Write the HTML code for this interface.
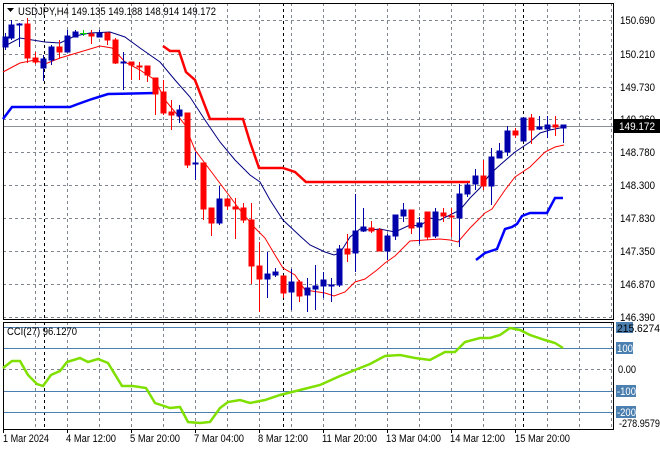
<!DOCTYPE html>
<html><head><meta charset="utf-8"><style>
html,body{margin:0;padding:0;background:#fff;}
svg{display:block;font-family:"Liberation Sans",sans-serif;}
</style></head><body>
<svg width="660" height="450" viewBox="0 0 660 450" xmlns="http://www.w3.org/2000/svg">
<rect width="660" height="450" fill="#fff"/>
<g stroke="#7f8690" stroke-width="1" stroke-dasharray="3,3" fill="none">
<path d="M35.5 3V319M67.5 3V319M99.5 3V319M131.5 3V319M163.5 3V319M195.5 3V319M227.5 3V319M259.5 3V319M291.5 3V319M323.5 3V319M355.5 3V319M387.5 3V319M419.5 3V319M451.5 3V319M483.5 3V319M515.5 3V319M547.5 3V319M579.5 3V319M611.5 3V319"/>
<path d="M35.5 322V429M67.5 322V429M99.5 322V429M131.5 322V429M163.5 322V429M195.5 322V429M227.5 322V429M259.5 322V429M291.5 322V429M323.5 322V429M355.5 322V429M387.5 322V429M419.5 322V429M451.5 322V429M483.5 322V429M515.5 322V429M547.5 322V429M579.5 322V429M611.5 322V429"/>
<path d="M3 20.5H614M3 54.5H614M3 87.5H614M3 119.5H614M3 152.5H614M3 185.5H614M3 218.5H614M3 251.5H614M3 284.5H614M3 317.5H614M3 369.5H614"/>
</g>
<g stroke="#000" stroke-width="1" stroke-dasharray="3,3" fill="none">
<path d="M44.5 3V319M283.5 3V319M523.5 3V319M44.5 322V429M283.5 322V429M523.5 322V429"/>
</g>
<path d="M3 126.5H614" stroke="#8a9098" stroke-width="1"/>
<g stroke="#4a7fb0" stroke-width="1">
<path d="M3 327.5H614M3 348.5H614M3 391.5H614M3 412.5H614"/>
</g>
<rect x="3.5" y="3.5" width="610" height="316" fill="none" stroke="#000"/>
<rect x="3.5" y="322.5" width="610" height="107" fill="none" stroke="#000"/>
<polyline fill="none" stroke="#f00" stroke-width="2.5" points="163,46 170,51 179,51 186,72 195,80 210,119 243,119 250,142 259,168 283,168 295,172 306,182 470,182"/>
<polyline fill="none" stroke="#00f" stroke-width="2.5" points="3,119 12,107 70,107 78,104 92,99 108,94 155,93"/>
<polyline fill="none" stroke="#00f" stroke-width="2.5" points="476,260 485,253 497,249 505,229 512,227 517,224 522,216 530,213 547,213 555,198 563,198"/>
<polyline fill="none" stroke="#000080" stroke-width="1" points="3,47 20,38 45,42 60,43 75,36 90,33 110,32 125,37 140,48 160,62 175,80 190,97 205,120 220,142 235,160 250,175 260,182 270,200 283,220 300,236 310,245 325,252 334,255 340,253 350,237 360,229 370,230 380,229 395,232 410,225 420,226 430,218 440,220 460,210 470,198 480,188 490,174 500,165 515,152 530,142 540,133 550,130 565,127"/>
<polyline fill="none" stroke="#f00" stroke-width="1" points="3,72 20,63 35,60 45,64 60,58 80,52 100,46 112,48 125,62 140,70 155,80 165,100 175,112 185,125 195,150 210,170 225,190 240,210 255,228 265,238 275,255 283,268 295,275 305,290 325,293 334,296 345,292 355,282 365,279 377,270 385,263 395,256 410,241 425,240 440,239 450,240 458,242 470,228 485,213 492,209 505,190 515,177 530,167 545,152 555,147 564,145"/>
<g stroke-width="1">
<g stroke="#00a" fill="#00a">
<path d="M5.5 33V50M11.5 20V40M19.5 23V47M43.5 55V81M51.5 45V65M67.5 30V52M75.5 30V37M99.5 30V37M123.5 52V90M179.5 105V123M195.5 152V180M219.5 186V225M267.5 252V298M275.5 268V277M291.5 269V310M307.5 278V312M315.5 265V310M323.5 272V298M331.5 278V302M339.5 245V287M355.5 194V272M363.5 208V232M387.5 234V260M395.5 215V240M403.5 203V222M419.5 217V244M435.5 208V238M459.5 184V247M467.5 183V197M475.5 169V190M491.5 148V205M499.5 143V158M507.5 126V156M523.5 118V141M539.5 116V130M547.5 116V138M563.5 125V143" fill="none"/>
<rect x="3" y="37" width="5" height="10"/><rect x="9" y="25" width="5" height="13"/><rect x="17" y="24" width="5" height="1"/>
<rect x="41" y="59" width="5" height="9"/><rect x="49" y="47" width="5" height="13"/><rect x="65" y="36" width="5" height="16"/>
<rect x="73" y="32" width="5" height="5"/><rect x="97" y="33" width="5" height="4"/><rect x="121" y="62" width="5" height="1"/>
<rect x="177" y="110" width="5" height="6"/><rect x="193" y="163" width="5" height="1"/><rect x="217" y="199" width="5" height="24"/>
<rect x="265" y="274" width="5" height="5"/><rect x="273" y="272" width="5" height="3"/><rect x="289" y="282" width="5" height="10"/>
<rect x="305" y="288" width="5" height="7"/><rect x="313" y="286" width="5" height="3"/><rect x="321" y="280" width="5" height="6"/>
<rect x="329" y="285" width="5" height="1"/><rect x="337" y="249" width="5" height="36"/><rect x="353" y="231" width="5" height="22"/>
<rect x="361" y="227" width="5" height="4"/><rect x="385" y="236" width="5" height="15"/><rect x="393" y="215" width="5" height="21"/>
<rect x="401" y="210" width="5" height="6"/><rect x="417" y="223" width="5" height="4"/><rect x="433" y="212" width="5" height="24"/>
<rect x="457" y="194" width="5" height="24"/><rect x="465" y="185" width="5" height="9"/><rect x="473" y="176" width="5" height="8"/>
<rect x="489" y="157" width="5" height="29"/><rect x="497" y="151" width="5" height="7"/><rect x="505" y="131" width="5" height="21"/>
<rect x="521" y="118" width="5" height="23"/><rect x="537" y="127" width="5" height="2"/><rect x="545" y="125" width="5" height="4"/>
<rect x="561" y="125" width="5" height="3"/>
</g>
<g stroke="#f00" fill="#f00">
<path d="M27.5 18V63M35.5 52V64M59.5 40V58M91.5 30V44M107.5 32V45M115.5 38V64M131.5 62V80M139.5 62V80M147.5 66V82M155.5 78V115M163.5 80V115M171.5 100V130M187.5 113V168M203.5 163V220M211.5 208V236M227.5 198V210M235.5 198V239M243.5 203V223M251.5 203V284M259.5 242V312M283.5 276V298M299.5 280V302M347.5 234V262M371.5 221V233M379.5 228V251M411.5 210V234M427.5 216V240M443.5 208V222M451.5 208V237M483.5 160V190M515.5 128V138M531.5 114V144M555.5 116V136" fill="none"/>
<rect x="25" y="24" width="5" height="34"/><rect x="33" y="58" width="5" height="4"/><rect x="57" y="47" width="5" height="5"/>
<rect x="89" y="34" width="5" height="2"/><rect x="105" y="33" width="5" height="7"/><rect x="113" y="40" width="5" height="23"/>
<rect x="129" y="62" width="5" height="3"/><rect x="137" y="66" width="5" height="1"/><rect x="145" y="66" width="5" height="9"/>
<rect x="153" y="78" width="5" height="16"/><rect x="161" y="92" width="5" height="21"/><rect x="169" y="112" width="5" height="3"/>
<rect x="185" y="113" width="5" height="52"/><rect x="201" y="163" width="5" height="46"/><rect x="209" y="208" width="5" height="15"/>
<rect x="225" y="199" width="5" height="7"/><rect x="233" y="207" width="5" height="2"/><rect x="241" y="208" width="5" height="12"/>
<rect x="249" y="220" width="5" height="46"/><rect x="257" y="266" width="5" height="13"/><rect x="281" y="276" width="5" height="17"/>
<rect x="297" y="282" width="5" height="14"/><rect x="345" y="249" width="5" height="5"/><rect x="369" y="228" width="5" height="3"/>
<rect x="377" y="230" width="5" height="21"/><rect x="409" y="210" width="5" height="18"/><rect x="425" y="212" width="5" height="25"/>
<rect x="441" y="213" width="5" height="3"/><rect x="449" y="216" width="5" height="1"/><rect x="481" y="176" width="5" height="10"/>
<rect x="513" y="131" width="5" height="4"/><rect x="529" y="118" width="5" height="12"/><rect x="553" y="125" width="5" height="2"/>
</g>
<path d="M83.5 30V36M80 33.5H87" stroke="#0c0" fill="none"/>
</g>
<polyline fill="none" stroke="#7fe000" stroke-width="2.5" points="3,368 12,361 20,361 28,375 37,384 43,386 51,375 60,371 67,362 80,358 88,362 98,359 108,363 122,386 133,386 146,388 155,403 170,408 180,407 188,422 200,423 210,422 220,408 228,402 240,400 250,403 265,400 280,395 300,390 320,385 340,376 355,370 370,364 385,356 400,355 415,358 430,360 445,352 455,352 465,342 480,338 490,338 500,335 510,328 520,330 530,335 545,340 555,343 563,348"/>
<path d="M7 8h7l-3.5 4z" fill="#000"/>
<text x="18" y="15" font-size="11" fill="#000" textLength="198" lengthAdjust="spacingAndGlyphs">USDJPY,H4  149.135 149.188 148.914 149.172</text>
<text x="7" y="335" font-size="11" fill="#000" textLength="70" lengthAdjust="spacingAndGlyphs">CCI(27) 96.1270</text>
<g font-size="11" fill="#000">
<text x="620" y="24" textLength="35" lengthAdjust="spacingAndGlyphs">150.690</text>
<text x="620" y="58" textLength="35" lengthAdjust="spacingAndGlyphs">150.210</text>
<text x="620" y="91" textLength="35" lengthAdjust="spacingAndGlyphs">149.730</text>
<text x="620" y="123" textLength="35" lengthAdjust="spacingAndGlyphs">149.260</text>
<text x="620" y="156" textLength="35" lengthAdjust="spacingAndGlyphs">148.780</text>
<text x="620" y="189" textLength="35" lengthAdjust="spacingAndGlyphs">148.300</text>
<text x="620" y="222" textLength="35" lengthAdjust="spacingAndGlyphs">147.830</text>
<text x="620" y="255" textLength="35" lengthAdjust="spacingAndGlyphs">147.350</text>
<text x="620" y="288" textLength="35" lengthAdjust="spacingAndGlyphs">146.870</text>
<text x="620" y="321" textLength="35" lengthAdjust="spacingAndGlyphs">146.390</text>
</g>
<rect x="614" y="119" width="46" height="14" fill="#000"/>
<text x="619" y="130" font-size="11" fill="#fff" textLength="36" lengthAdjust="spacingAndGlyphs">149.172</text>
<g fill="#4a7fb0">
<rect x="616" y="322" width="17" height="11"/>
<rect x="616" y="342" width="17" height="12"/>
<rect x="616" y="385" width="20" height="12"/>
<rect x="616" y="406" width="20" height="12"/>
</g>
<g font-size="11" fill="#000">
<text x="617" y="332" textLength="43" lengthAdjust="spacingAndGlyphs">215.6274</text>
<text x="617" y="352" fill="#fff" textLength="16" lengthAdjust="spacingAndGlyphs">100</text>
<text x="618" y="373" textLength="18" lengthAdjust="spacingAndGlyphs">0.00</text>
<text x="617" y="395" fill="#fff" textLength="19" lengthAdjust="spacingAndGlyphs">-100</text>
<text x="617" y="416" fill="#fff" textLength="19" lengthAdjust="spacingAndGlyphs">-200</text>
<text x="619" y="427" textLength="41" lengthAdjust="spacingAndGlyphs">-278.9579</text>
</g>
<path d="M3.5 429V433M67.5 429V433M131.5 429V433M195.5 429V433M259.5 429V433M323.5 429V433M387.5 429V433M451.5 429V433M515.5 429V433" stroke="#000"/>
<g font-size="11" fill="#000">
<text x="3" y="442" textLength="46" lengthAdjust="spacingAndGlyphs">1 Mar 2024</text>
<text x="66" y="442" textLength="50" lengthAdjust="spacingAndGlyphs">4 Mar 12:00</text>
<text x="130" y="442" textLength="50" lengthAdjust="spacingAndGlyphs">5 Mar 20:00</text>
<text x="194" y="442" textLength="50" lengthAdjust="spacingAndGlyphs">7 Mar 04:00</text>
<text x="258" y="442" textLength="50" lengthAdjust="spacingAndGlyphs">8 Mar 12:00</text>
<text x="322" y="442" textLength="55" lengthAdjust="spacingAndGlyphs">11 Mar 20:00</text>
<text x="386" y="442" textLength="55" lengthAdjust="spacingAndGlyphs">13 Mar 04:00</text>
<text x="450" y="442" textLength="55" lengthAdjust="spacingAndGlyphs">14 Mar 12:00</text>
<text x="515" y="442" textLength="55" lengthAdjust="spacingAndGlyphs">15 Mar 20:00</text>
</g>
</svg>
</body></html>
